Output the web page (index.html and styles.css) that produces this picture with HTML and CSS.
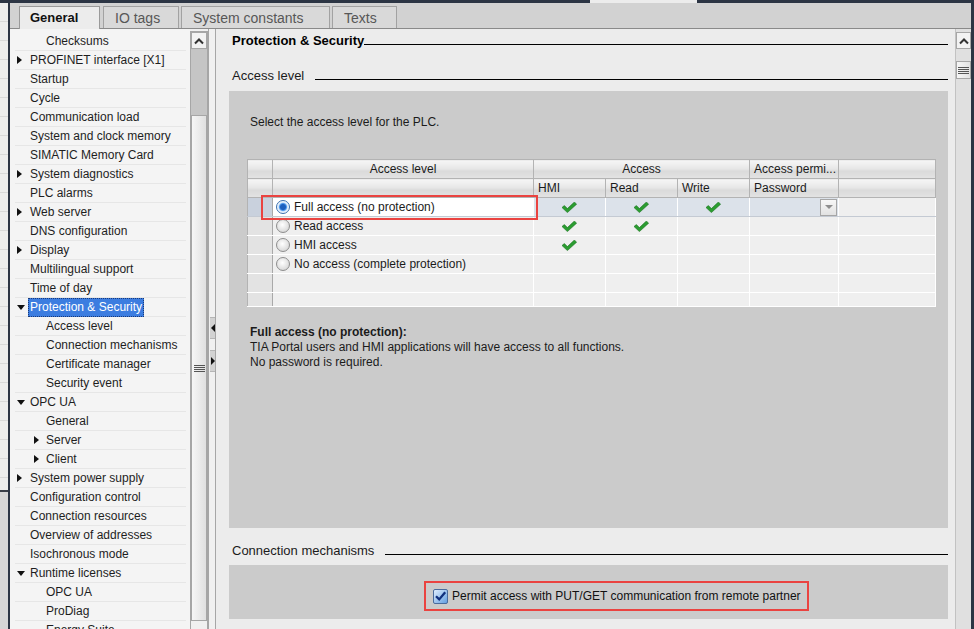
FILE: index.html
```html
<!DOCTYPE html>
<html lang="en">
<head>
  <meta charset="UTF-8" />
  <title>Properties - Protection &amp; Security</title>
  <link rel="stylesheet" href="styles.css">
</head>
<body>
  <div class="topbar"><span class="topbar-lit"></span></div>
  <div class="shell">
    <div class="frame-left"></div>
    <div class="window">
      <div class="tabbar">
        <div class="tab active">General</div>
        <div class="tab t-io">IO tags</div>
        <div class="tab t-const">System constants</div>
        <div class="tab t-texts">Texts</div>
      </div>

      <div class="main">
        <div class="tree">
          <div class="node l1"><span class="slot"></span>Checksums</div>
          <div class="node"><span class="slot"><i class="tw-r"></i></span>PROFINET interface [X1]</div>
          <div class="node"><span class="slot"></span>Startup</div>
          <div class="node"><span class="slot"></span>Cycle</div>
          <div class="node"><span class="slot"></span>Communication load</div>
          <div class="node"><span class="slot"></span>System and clock memory</div>
          <div class="node"><span class="slot"></span>SIMATIC Memory Card</div>
          <div class="node"><span class="slot"><i class="tw-r"></i></span>System diagnostics</div>
          <div class="node"><span class="slot"></span>PLC alarms</div>
          <div class="node"><span class="slot"><i class="tw-r"></i></span>Web server</div>
          <div class="node"><span class="slot"></span>DNS configuration</div>
          <div class="node"><span class="slot"><i class="tw-r"></i></span>Display</div>
          <div class="node"><span class="slot"></span>Multilingual support</div>
          <div class="node"><span class="slot"></span>Time of day</div>
          <div class="node"><span class="slot"><i class="tw-d"></i></span><span class="selected">Protection &amp; Security</span></div>
          <div class="node l1"><span class="slot"></span>Access level</div>
          <div class="node l1"><span class="slot"></span>Connection mechanisms</div>
          <div class="node l1"><span class="slot"></span>Certificate manager</div>
          <div class="node l1"><span class="slot"></span>Security event</div>
          <div class="node"><span class="slot"><i class="tw-d"></i></span>OPC UA</div>
          <div class="node l1"><span class="slot"></span>General</div>
          <div class="node l1"><span class="slot"><i class="tw-r"></i></span>Server</div>
          <div class="node l1"><span class="slot"><i class="tw-r"></i></span>Client</div>
          <div class="node"><span class="slot"><i class="tw-r"></i></span>System power supply</div>
          <div class="node"><span class="slot"></span>Configuration control</div>
          <div class="node"><span class="slot"></span>Connection resources</div>
          <div class="node"><span class="slot"></span>Overview of addresses</div>
          <div class="node"><span class="slot"></span>Isochronous mode</div>
          <div class="node"><span class="slot"><i class="tw-d"></i></span>Runtime licenses</div>
          <div class="node l1"><span class="slot"></span>OPC UA</div>
          <div class="node l1"><span class="slot"></span>ProDiag</div>
          <div class="node l1"><span class="slot"></span>Energy Suite</div>
        </div>

        <div class="tree-scroll">
          <div class="sb">
            <div class="sb-btn">
              <svg width="12" height="8" viewBox="0 0 12 8"><polyline points="2,6.5 6,2.5 10,6.5" fill="none" stroke="#333" stroke-width="2"/></svg>
            </div>
            <div class="sb-track"></div>
            <div class="sb-thumb">
              <svg width="11" height="9" viewBox="0 0 11 9"><path d="M0 1.5H11M0 3.5H11M0 5.5H11M0 7.5H11" stroke="#555" stroke-width="1"/></svg>
            </div>
          </div>
        </div>

        <div class="splitter">
          <div class="split-btn first"><i class="sp-l"></i></div>
          <div class="split-btn"><i class="sp-r"></i></div>
        </div>

        <div class="content">
          <div class="title-row">
            <span class="title">Protection &amp; Security</span>
            <span class="rule"></span>
          </div>

          <div class="sub-row">
            <span class="sub">Access level</span>
            <span class="rule gap"></span>
          </div>

          <div class="panel panel-access">
            <p class="intro">Select the access level for the PLC.</p>

            <div class="grid-wrap">
              <table class="grid">
                <colgroup>
                  <col class="c-rh"><col class="c-level"><col class="c-acc"><col class="c-acc"><col class="c-acc"><col class="c-pw"><col class="c-rest">
                </colgroup>
                <thead>
                  <tr>
                    <th></th>
                    <th>Access level</th>
                    <th colspan="3">Access</th>
                    <th class="left">Access permi...</th>
                    <th></th>
                  </tr>
                  <tr>
                    <th></th>
                    <th></th>
                    <th class="left">HMI</th>
                    <th class="left">Read</th>
                    <th class="left">Write</th>
                    <th class="left">Password</th>
                    <th></th>
                  </tr>
                </thead>
                <tbody>
                  <tr class="sel">
                    <td class="rh"></td>
                    <td class="lvl"><span class="radio on"></span>Full access (no protection)</td>
                    <td class="ck"><svg class="tick" viewBox="0 0 15 11"><polygon points="0,5.5 2.4,3.6 5.4,6.6 12.4,0 14.6,2.2 5.4,10.6"/></svg></td>
                    <td class="ck"><svg class="tick" viewBox="0 0 15 11"><polygon points="0,5.5 2.4,3.6 5.4,6.6 12.4,0 14.6,2.2 5.4,10.6"/></svg></td>
                    <td class="ck"><svg class="tick" viewBox="0 0 15 11"><polygon points="0,5.5 2.4,3.6 5.4,6.6 12.4,0 14.6,2.2 5.4,10.6"/></svg></td>
                    <td class="pw"><span class="dd"><i class="dd-arrow"></i></span></td>
                    <td class="rest"></td>
                  </tr>
                  <tr>
                    <td class="rh"></td>
                    <td class="lvl"><span class="radio"></span>Read access</td>
                    <td class="ck"><svg class="tick" viewBox="0 0 15 11"><polygon points="0,5.5 2.4,3.6 5.4,6.6 12.4,0 14.6,2.2 5.4,10.6"/></svg></td>
                    <td class="ck"><svg class="tick" viewBox="0 0 15 11"><polygon points="0,5.5 2.4,3.6 5.4,6.6 12.4,0 14.6,2.2 5.4,10.6"/></svg></td>
                    <td></td>
                    <td></td>
                    <td class="rest"></td>
                  </tr>
                  <tr>
                    <td class="rh"></td>
                    <td class="lvl"><span class="radio"></span>HMI access</td>
                    <td class="ck"><svg class="tick" viewBox="0 0 15 11"><polygon points="0,5.5 2.4,3.6 5.4,6.6 12.4,0 14.6,2.2 5.4,10.6"/></svg></td>
                    <td></td>
                    <td></td>
                    <td></td>
                    <td class="rest"></td>
                  </tr>
                  <tr>
                    <td class="rh"></td>
                    <td class="lvl"><span class="radio"></span>No access (complete protection)</td>
                    <td></td><td></td><td></td><td></td>
                    <td class="rest"></td>
                  </tr>
                  <tr>
                    <td class="rh"></td><td></td><td></td><td></td><td></td><td></td><td class="rest"></td>
                  </tr>
                  <tr class="last">
                    <td class="rh"></td><td></td><td></td><td></td><td></td><td></td><td class="rest"></td>
                  </tr>
                </tbody>
              </table>
              <div class="mark mark-row"></div>
            </div>

            <div class="desc">
              <p class="desc-title">Full access (no protection):</p>
              <p>TIA Portal users and HMI applications will have access to all functions.</p>
              <p>No password is required.</p>
            </div>
          </div>

          <div class="sub-row sub-conn">
            <span class="sub">Connection mechanisms</span>
            <span class="rule gap"></span>
          </div>

          <div class="panel panel-conn">
            <label class="mark permit">
              <svg width="15" height="15" viewBox="0 0 15 15">
                <defs>
                  <linearGradient id="cbg" x1="0" y1="0" x2="1" y2="1">
                    <stop offset="0" stop-color="#e4f1ff"/>
                    <stop offset="1" stop-color="#5f9be0"/>
                  </linearGradient>
                </defs>
                <rect x="0.5" y="0.5" width="14" height="14" rx="1.5" fill="url(#cbg)" stroke="#4a6b9c"/>
                <path d="M3 7.2 L6.2 10.4 L12.2 3.2" fill="none" stroke="#10307e" stroke-width="2.3"/>
              </svg>
              <span>Permit access with PUT/GET communication from remote partner</span>
            </label>
          </div>
        </div>

        <div class="vscroll">
          <div class="sb-btn">
            <svg width="12" height="8" viewBox="0 0 12 8"><polyline points="2,6.5 6,2.5 10,6.5" fill="none" stroke="#333" stroke-width="2"/></svg>
          </div>
          <div class="vs-gap"></div>
          <div class="vs-thumb">
            <svg width="11" height="9" viewBox="0 0 11 9"><path d="M0 1.5H11M0 3.5H11M0 5.5H11M0 7.5H11" stroke="#555" stroke-width="1"/></svg>
          </div>
        </div>
      </div>
    </div>
    <div class="frame-right"></div>
  </div>
</body>
</html>
```

FILE: styles.css
```css
* {
  box-sizing: border-box;
}
body {
  margin: 0;
  width: 974px;
  height: 629px;
  overflow: hidden;
  font-family: "Liberation Sans", Arial, sans-serif;
  font-size: 12px;
  color: #1b1b1b;
  background: #ececec;
}
p {
  margin: 0;
}

/* window frame */
.topbar {
  height: 3px;
  background: #2c3544;
  padding-left: 590px;
}
.topbar-lit {
  display: block;
  width: 107px;
  height: 3px;
  background: #ececec;
}
.shell {
  display: flex;
  height: 626px;
}
.frame-left {
  width: 10px;
  flex: none;
  border-right: 2px solid #2c3544;
  background:
    linear-gradient(to bottom, transparent 0 487px, #3a3f48 487px 489px, #d6d6d6 489px),
    repeating-linear-gradient(to bottom, #ededed 0 18px, #d9d9d9 18px 19px);
}
.frame-right {
  width: 3px;
  flex: none;
  background: #2c3544;
}
.window {
  flex: 1;
  display: flex;
  flex-direction: column;
  min-width: 0;
}

/* tabs */
.tabbar {
  height: 26px;
  flex: none;
  display: flex;
  align-items: flex-end;
  padding-left: 9px;
  background: #d2d2d2;
  border-bottom: 1px solid #8a8a8a;
}
.tab {
  height: 22px;
  padding: 3px 0 0 11px;
  margin-right: 2px;
  font-size: 14px;
  color: #575757;
  background: #d9d9d9;
  border: 1px solid #a2a2a2;
  border-bottom: none;
}
.tab.active {
  width: 81px;
  margin-right: 3px;
  margin-bottom: -1px;
  height: 23px;
  padding-left: 10px;
  font-size: 13px;
  font-weight: bold;
  color: #111;
  background: #ececec;
  border-color: #9a9a9a;
}
.t-io { width: 76px; }
.t-const { width: 149px; }
.t-texts { width: 65px; }

/* main area */
.main {
  flex: 1;
  display: flex;
  min-height: 0;
  overflow: hidden;
}

/* tree */
.tree {
  width: 180px;
  flex: none;
  padding-top: 3px;
  background: #f4f4f4;
  overflow: hidden;
}
.node {
  height: 19px;
  margin: 0 4px 0 5px;
  display: flex;
  align-items: center;
  border-bottom: 1px solid #e6e6e6;
  white-space: nowrap;
  color: #1e1e1e;
}
.node.l1 {
  padding-left: 16px;
}
.slot {
  width: 15px;
  flex: none;
  display: flex;
  align-items: center;
  padding-left: 2px;
}
.l1 .slot {
  padding-left: 3px;
}
.tw-r {
  width: 0;
  height: 0;
  border-left: 5px solid #111;
  border-top: 4px solid transparent;
  border-bottom: 4px solid transparent;
}
.tw-d {
  width: 0;
  height: 0;
  border-top: 5px solid #111;
  border-left: 4px solid transparent;
  border-right: 4px solid transparent;
}
.selected {
  margin-left: -2px;
  padding: 1px 1px 2px;
  background: #3c7de0;
  color: #fff;
  border: 1px dotted #1b3a78;
}

/* tree scrollbar */
.tree-scroll {
  width: 18px;
  flex: none;
  padding-top: 2px;
  background: #f0f0f0;
}
.sb {
  height: 100%;
  display: flex;
  flex-direction: column;
  border: 1px solid #a6a6a6;
  border-bottom: none;
}
.sb-btn {
  height: 17px;
  flex: none;
  display: flex;
  align-items: center;
  justify-content: center;
  background: #f2f2f2;
  border: 1px solid #a6a6a6;
}
.sb-track {
  height: 66px;
  flex: none;
  background: #c5c5c5;
}
.sb-thumb {
  flex: none;
  height: 506px;
  display: flex;
  align-items: center;
  justify-content: center;
  background: linear-gradient(to right, #f6f6f6, #e0e0e0);
  border: 1px solid #a6a6a6;
}

/* splitter */
.splitter {
  width: 8px;
  flex: none;
  padding: 288px 0 0 1px;
  background: #f0f0f0;
  border-left: 1px solid #a6a6a6;
  border-right: 1px solid #a6a6a6;
}
.split-btn {
  height: 22px;
  margin-top: 11px;
  display: flex;
  align-items: center;
  justify-content: center;
  background: #d2d2d2;
  border-top: 1px solid #b5b5b5;
  border-bottom: 1px solid #b5b5b5;
}
.split-btn.first {
  margin-top: 0;
}
.sp-l {
  border-right: 4px solid #111;
  border-top: 4px solid transparent;
  border-bottom: 4px solid transparent;
}
.sp-r {
  border-left: 4px solid #111;
  border-top: 4px solid transparent;
  border-bottom: 4px solid transparent;
}

/* content */
.content {
  width: 739px;
  flex: none;
  padding: 0 7px 0 13px;
  background: #ececec;
  overflow: hidden;
}
.title-row,
.sub-row {
  display: flex;
  align-items: baseline;
  padding-left: 3px;
  line-height: 16px;
  font-size: 13px;
}
.title-row {
  margin-top: 4px;
}
.title {
  font-weight: bold;
  color: #000;
}
.sub-row {
  margin-top: 19px;
  color: #1b1b1b;
}
.rule {
  flex: 1;
  border-bottom: 1px solid #000;
}
.rule.gap {
  margin-left: 11px;
}
.panel {
  margin-top: 7px;
  background: #cbcbcb;
}
.panel-access {
  height: 437px;
  padding: 23px 0 0 18px;
}
.intro {
  margin-left: 3px;
  line-height: 16px;
}

/* access table */
.grid-wrap {
  position: relative;
  width: 688px;
  margin-top: 29px;
}
.grid {
  width: 688px;
  table-layout: fixed;
  border-collapse: collapse;
}
.c-rh { width: 25px; }
.c-level { width: 261px; }
.c-acc { width: 72px; }
.c-pw { width: 89px; }
.c-rest { width: 97px; }
.grid th {
  height: 19px;
  padding: 0 4px;
  font-weight: normal;
  text-align: center;
  white-space: nowrap;
  overflow: hidden;
  color: #1b1b1b;
  background: linear-gradient(#f6f6f6, #e7e7e7 45%, #dadada 60%, #e3e3e3);
  border: 1px solid #b3b3b3;
}
.grid th.left {
  text-align: left;
}
.grid td {
  height: 19px;
  padding: 0;
  background: #efefef;
  border: 1px solid #fff;
}
.grid tr.last td {
  height: 14px;
}
.grid td.rh {
  background: #e3e3e3;
  border-right-color: #a9a9a9;
  border-left-color: #b3b3b3;
}
.grid td.lvl {
  padding-left: 3px;
  white-space: nowrap;
}
.grid td.ck {
  text-align: center;
}
.grid tr.sel td {
  background: #dce2ea;
  border-bottom-color: #c4cad3;
}
.grid tr.sel td.rh {
  background: #c9d1dd;
}
.grid tr.sel td.lvl {
  background: #fff;
}
.grid tr.sel td.rest {
  background: #efefef;
}
.tick {
  width: 15px;
  height: 11px;
  vertical-align: middle;
  fill: #2b9d31;
  stroke: #17711c;
  stroke-width: 0.6;
}
.radio {
  display: inline-block;
  width: 14px;
  height: 14px;
  margin-right: 4px;
  vertical-align: -3px;
  border-radius: 50%;
  border: 1px solid #8e8e8e;
  background: radial-gradient(circle at 45% 40%, #ffffff, #dedede 65%, #c7c7c7);
}
.radio.on {
  border-color: #3a6fae;
  background: radial-gradient(circle, #1d5fbe 0 2.5px, #4d97ec 3.5px, #d9eafc 4.6px, #f6faff 6px);
}
.grid td.pw {
  text-align: right;
  padding-right: 1px;
}
.dd {
  display: inline-flex;
  width: 17px;
  height: 17px;
  vertical-align: middle;
  align-items: center;
  justify-content: center;
  background: linear-gradient(#f7f7f7, #e2e2e2);
  border: 1px solid #a6a6a6;
}
.dd-arrow {
  border-top: 4px solid #8e8e8e;
  border-left: 4px solid transparent;
  border-right: 4px solid transparent;
}

/* red annotation boxes */
.mark {
  border: 2px solid #ea4340;
}
.mark-row {
  position: absolute;
  left: 14px;
  top: 36px;
  width: 277px;
  height: 25px;
}

.desc {
  margin: 18px 0 0 3px;
  line-height: 15px;
}
.desc-title {
  font-weight: bold;
}

.sub-conn {
  margin-top: 15px;
}
.panel-conn {
  height: 54px;
  margin-top: 6px;
  padding: 16px 0 0 195px;
}
.permit {
  display: inline-flex;
  align-items: center;
  gap: 4px;
  height: 30px;
  padding: 0 6px 0 7px;
  color: #111;
}
.permit svg {
  flex: none;
}

/* right scrollbar */
.vscroll {
  width: 16px;
  flex: none;
  padding-top: 3px;
  background: #e0e0e0;
  border-left: 1px solid #c2c2c2;
}
.vscroll .sb-btn {
  height: 17px;
}
.vs-gap {
  height: 12px;
}
.vs-thumb {
  height: 18px;
  display: flex;
  align-items: center;
  justify-content: center;
  background: linear-gradient(to right, #f6f6f6, #e2e2e2);
  border: 1px solid #a6a6a6;
}
```
